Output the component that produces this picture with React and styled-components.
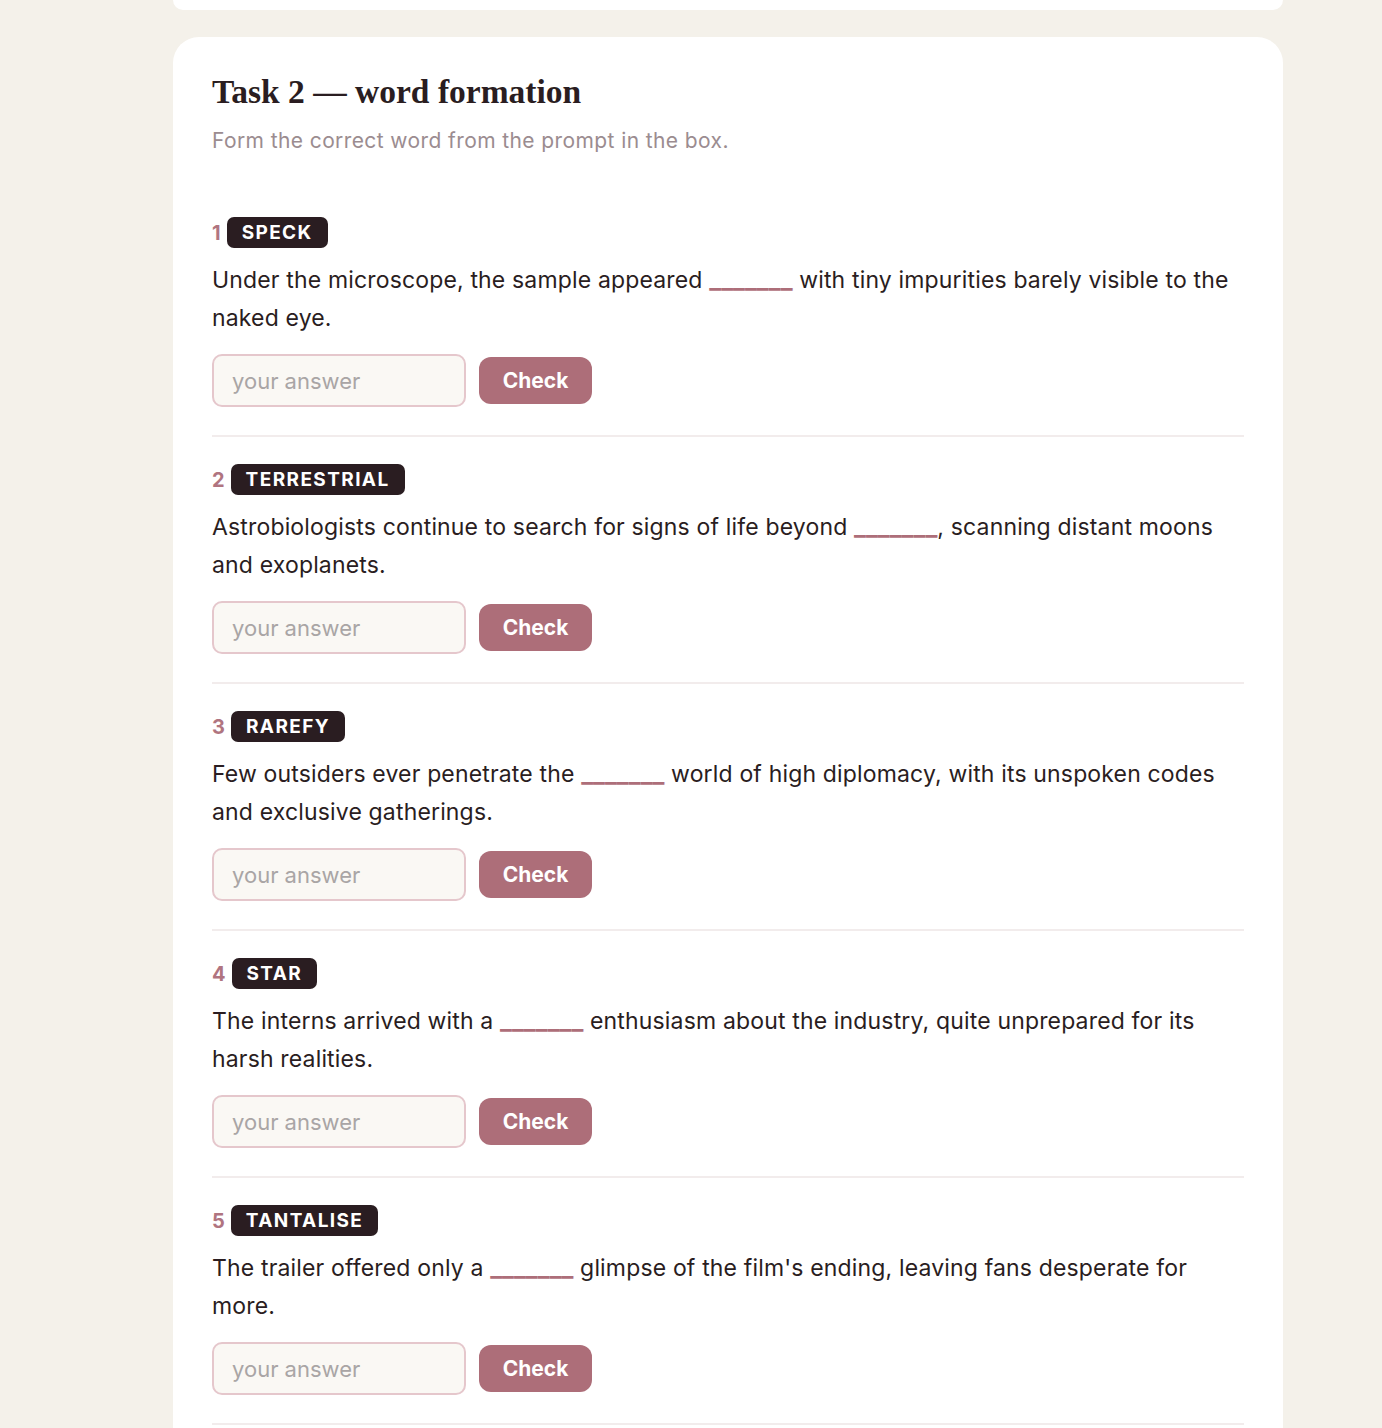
import React from "react"
import styled, { createGlobalStyle } from "styled-components"

const GlobalStyle = createGlobalStyle`
  html, body {
    margin: 0;
    padding: 0;
    background: #f4f1ea;
  }
  body {
    font-family: Inter, "Noto Sans", sans-serif;
    color: #2a1d21;
    -webkit-font-smoothing: antialiased;
  }
`

const Page = styled.div`
  width: 1110px;
  margin-left: 173px;
  display: flex;
  flex-direction: column;
  gap: 27px;
`

const PrevCard = styled.div`
  height: 10px;
  background: white;
  border-radius: 0 0 26px 26px;
`

const Card = styled.section`
  background: white;
  border-radius: 26px;
  padding: 35px 39px 40px;
`

const Title = styled.h2`
  margin: 0;
  font-family: Georgia, "Liberation Serif", "DejaVu Serif", serif;
  font-size: 33.5px;
  font-weight: 700;
  line-height: 40px;
  color: #2a1d21;
`

const Subtitle = styled.p`
  margin: 14px 0 0;
  font-size: 21px;
  line-height: 30px;
  letter-spacing: 0.4px;
  color: #9b8c90;
`

const List = styled.div`
  margin-top: 61px;
  display: flex;
  flex-direction: column;
`

const Item = styled.div`
  padding: 27px 0 28px;
  border-bottom: 2px solid #f2ecec;
  &:first-child {
    padding-top: 0;
  }
`

const Head = styled.div`
  display: flex;
  align-items: center;
  gap: 6px;
`

const Num = styled.span`
  font-size: 20px;
  font-weight: 700;
  color: #b07480;
`

const Badge = styled.span`
  display: inline-flex;
  align-items: center;
  height: 31px;
  padding: 0 15px;
  border-radius: 7px;
  background: #2a1d21;
  color: white;
  font-size: 19px;
  font-weight: 700;
  letter-spacing: 1.4px;
`

const Sentence = styled.p`
  margin: 13px 0 0;
  font-size: 23px;
  line-height: 38px;
  letter-spacing: 0.16px;
  color: #2a1d21;
`

const Blank = styled.span`
  color: #ad6e79;
  font-size: 25px;
  font-weight: 700;
  line-height: 1;
  letter-spacing: 0;
`

const Row = styled.div`
  margin-top: 17px;
  display: flex;
  align-items: center;
  gap: 13px;
`

const Input = styled.input`
  box-sizing: border-box;
  width: 254px;
  height: 53px;
  padding: 0 18px;
  border: 2px solid #e5c7cc;
  border-radius: 10px;
  background: #faf8f4;
  font-family: inherit;
  font-size: 22px;
  color: #2a1d21;
  outline: none;
  &::placeholder {
    color: #a9a5a5;
  }
`

const Button = styled.button`
  width: 113px;
  height: 47px;
  border: none;
  border-radius: 12px;
  background: #ad6e79;
  color: white;
  font-family: inherit;
  font-size: 21px;
  font-weight: 700;
  cursor: pointer;
`

const items = [
  {
    word: "SPECK",
    before: "Under the microscope, the sample appeared ",
    after: " with tiny impurities barely visible to the naked eye.",
  },
  {
    word: "TERRESTRIAL",
    before: "Astrobiologists continue to search for signs of life beyond ",
    after: ", scanning distant moons and exoplanets.",
  },
  {
    word: "RAREFY",
    before: "Few outsiders ever penetrate the ",
    after: " world of high diplomacy, with its unspoken codes and exclusive gatherings.",
  },
  {
    word: "STAR",
    before: "The interns arrived with a ",
    after: " enthusiasm about the industry, quite unprepared for its harsh realities.",
  },
  {
    word: "TANTALISE",
    before: "The trailer offered only a ",
    after: " glimpse of the film's ending, leaving fans desperate for more.",
  },
]

export default function App() {
  return (
    <>
      <GlobalStyle />
      <Page>
        <PrevCard />
        <Card>
          <Title>Task 2 — word formation</Title>
          <Subtitle>Form the correct word from the prompt in the box.</Subtitle>
          <List>
            {items.map((it, i) => (
              <Item key={it.word}>
                <Head>
                  <Num>{i + 1}</Num>
                  <Badge>{it.word}</Badge>
                </Head>
                <Sentence>
                  {it.before}
                  <Blank>_______</Blank>
                  {it.after}
                </Sentence>
                <Row>
                  <Input placeholder="your answer" />
                  <Button>Check</Button>
                </Row>
              </Item>
            ))}
          </List>
        </Card>
      </Page>
    </>
  )
}
